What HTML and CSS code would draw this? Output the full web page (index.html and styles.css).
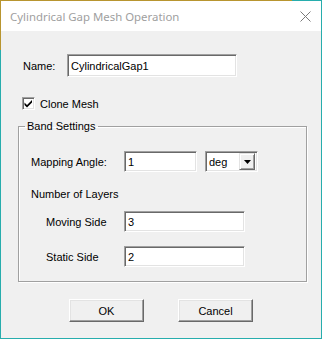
FILE: index.html
```html
<!DOCTYPE html>
<html lang="en">
<head>
    <meta charset="UTF-8">
    <meta name="viewport" content="width=device-width, initial-scale=1.0">
    <title>Cylindrical Gap Mesh Operation</title>
    <link rel="stylesheet" href="styles.css">
</head>
<body>
    <div class="window">
        <div class="frame">
            <div class="titlebar">
                <span class="title">Cylindrical Gap Mesh Operation</span>
                <svg class="close" width="11" height="11" viewBox="0 0 11 11">
                    <path d="M0.5 0.5 L10.5 10.5 M10.5 0.5 L0.5 10.5" stroke="#7a7a7a" stroke-width="1" fill="none"/>
                </svg>
            </div>

            <div class="dialog">
                <div class="row name-row">
                    <label class="name-label" for="name">Name:</label>
                    <input id="name" class="field name-field" type="text" value="CylindricalGap1">
                </div>

                <div class="row check-row">
                    <span class="checkbox">
                        <svg width="11" height="11" viewBox="0 0 11 11">
                            <path d="M1.5 4.5 L4 7 L9 2 L9 4.5 L4 9.5 L1.5 7 Z" fill="#000"/>
                        </svg>
                    </span>
                    <span>Clone Mesh</span>
                </div>

                <fieldset class="group">
                    <legend>Band Settings</legend>

                    <div class="row angle-row">
                        <span class="label">Mapping Angle:</span>
                        <input class="field angle-field" type="text" value="1">
                        <div class="combo">
                            <span class="combo-text">deg</span>
                            <span class="combo-btn">
                                <svg width="7" height="4" viewBox="0 0 7 4">
                                    <path d="M0 0 H7 L3.5 4 Z" fill="#000"/>
                                </svg>
                            </span>
                        </div>
                    </div>

                    <div class="layers-title">Number of Layers</div>

                    <div class="row side-row moving">
                        <span class="label sub">Moving Side</span>
                        <input class="field side-field" type="text" value="3">
                    </div>

                    <div class="row side-row static">
                        <span class="label sub">Static Side</span>
                        <input class="field side-field" type="text" value="2">
                    </div>
                </fieldset>

                <div class="buttons">
                    <button type="button">OK</button>
                    <button type="button">Cancel</button>
                </div>
            </div>
        </div>
    </div>
</body>
</html>
```

FILE: styles.css
```css
* {
    box-sizing: border-box;
}
body {
    margin: 0;
    font-family: "Liberation Sans", Arial, sans-serif;
    font-size: 11px;
    color: #000;
}
.window {
    width: 322px;
    height: 339px;
    padding: 1px;
    background:
        linear-gradient(#b8952f, #b8952f) top left / 292px 1px no-repeat,
        linear-gradient(#b8952f, #b8952f) top left / 1px 50px no-repeat,
        #27adad;
}
.frame {
    height: 337px;
    background-color: #f0f0f0;
}
.titlebar {
    height: 30px;
    background-color: #fff;
    display: flex;
    align-items: center;
    justify-content: space-between;
    padding: 0 10px 0 9px;
}
.title {
    font-family: "Noto Sans", "Open Sans", sans-serif;
    font-size: 11.4px;
    color: #a0a0a0;
}
.close {
    margin-top: 1px;
}
.row {
    display: flex;
    align-items: center;
}
.field {
    font-family: "Liberation Sans", Arial, sans-serif;
    font-size: 11px;
    color: #000;
    background-color: #fff;
    border: 1px solid;
    border-color: #a0a0a0 #fff #fff #a0a0a0;
    box-shadow: inset 1px 1px #696969, inset -1px -1px #e3e3e3;
    padding: 0 3px;
    margin: 0;
    outline: none;
}
.name-row {
    margin-top: 23px;
    padding-left: 22px;
}
.name-label {
    width: 44px;
}
.name-field {
    width: 170px;
    height: 23px;
}
.check-row {
    margin-top: 20px;
    padding-left: 21px;
    gap: 5px;
}
.checkbox {
    width: 13px;
    height: 13px;
    display: flex;
    align-items: center;
    justify-content: center;
    background-color: #fff;
    border: 1px solid;
    border-color: #a0a0a0 #fff #fff #a0a0a0;
    box-shadow: inset 1px 1px #696969, inset -1px -1px #e3e3e3;
}
.group {
    margin: 9px 0 0 17px;
    width: 289px;
    padding: 0 0 14px 0;
    border: 1px solid #a0a0a0;
    box-shadow: inset 1px 1px #fff, 1px 1px #fff;
}
.group legend {
    margin-left: 6px;
    padding: 0 2px;
    line-height: 14px;
}
.label {
    width: 105px;
    padding-left: 12px;
}
.label.sub {
    padding-left: 27px;
}
.angle-row {
    margin-top: 18px;
}
.angle-field {
    width: 73px;
    height: 21px;
}
.combo {
    margin-left: 8px;
    width: 53px;
    height: 21px;
    display: flex;
    align-items: center;
    justify-content: space-between;
    background-color: #fff;
    border: 1px solid;
    border-color: #a0a0a0 #fff #fff #a0a0a0;
    box-shadow: inset 1px 1px #696969, inset -1px -1px #e3e3e3;
    padding: 2px 2px 2px 3px;
}
.combo-btn {
    width: 16px;
    height: 17px;
    display: flex;
    align-items: center;
    justify-content: center;
    background-color: #f0f0f0;
    border: 1px solid;
    border-color: #e3e3e3 #696969 #696969 #e3e3e3;
    box-shadow: inset 1px 1px #fff, inset -1px -1px #a0a0a0;
}
.layers-title {
    margin-top: 16px;
    padding-left: 12px;
    line-height: 13px;
}
.side-row.moving {
    margin-top: 10px;
}
.side-row.static {
    margin-top: 14px;
}
.side-field {
    width: 121px;
    height: 21px;
}
.buttons {
    display: flex;
    gap: 34px;
    margin-top: 17px;
    padding-left: 68px;
}
button {
    width: 75px;
    height: 23px;
    font-family: "Liberation Sans", Arial, sans-serif;
    font-size: 11px;
    color: #000;
    background-color: #f0f0f0;
    border: 1px solid;
    border-color: #fff #696969 #696969 #fff;
    box-shadow: inset -1px -1px #a0a0a0, inset 1px 1px #e3e3e3;
    padding: 0;
}
```
